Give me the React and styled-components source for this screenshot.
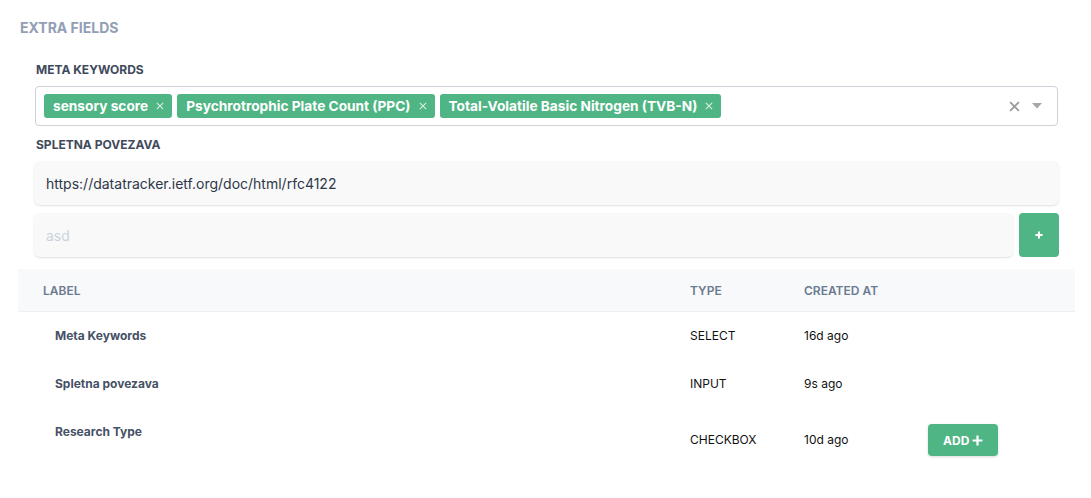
import React from 'react'
import styled, { createGlobalStyle } from 'styled-components'

const GlobalStyle = createGlobalStyle`
  body {
    margin: 0;
    background: #fff;
    font-family: Inter, "Noto Sans", sans-serif;
  }
`;

const green = '#4fb584';

const Wrapper = styled.div`
  width: 1091px;
  padding-top: 18px;
  box-sizing: border-box;
`;

const Title = styled.h2`
  margin: 0 0 0 20px;
  font-size: 14px;
  line-height: 20px;
  font-weight: 700;
  text-transform: uppercase;
  color: #929eb4;
`;

const Fields = styled.div`
  display: flex;
  flex-direction: column;
  padding: 24px 32px 0 34px;
`;

const FieldLabel = styled.label`
  font-size: 12px;
  line-height: 16px;
  font-weight: 700;
  text-transform: uppercase;
  color: #3f4a5c;
  margin: ${({ first }) => (first ? '0' : '11px')} 0 8px 2px;
`;

const SelectBox = styled.div`
  display: flex;
  align-items: center;
  height: 40px;
  box-sizing: border-box;
  margin: 0 1px;
  padding: 0 8px;
  border: 1px solid #cfd2d8;
  border-radius: 4px;
  background: #fff;
`;

const Tags = styled.div`
  flex: 1;
  display: flex;
  gap: 5px;
`;

const Tag = styled.span`
  display: inline-flex;
  align-items: center;
  height: 24px;
  padding: 0 8px 0 9px;
  gap: 8px;
  border-radius: 3px;
  background: ${green};
  color: #fff;
  font-size: 13.7px;
  font-weight: 700;
`;

const Indicators = styled.div`
  display: flex;
  align-items: center;
  gap: 12px;
  padding-right: 7px;
`;

const InputRow = styled.div`
  display: flex;
  gap: 6px;
  margin-top: ${({ gap }) => gap || 0}px;
`;

const TextInput = styled.input`
  flex: 1;
  height: 44px;
  box-sizing: border-box;
  padding: 0 12px;
  border: none;
  border-radius: 6px;
  background: #f9f9f9;
  box-shadow: 0 1px 2px rgba(0, 0, 0, 0.12);
  font-family: inherit;
  font-size: 14px;
  color: #2d3748;
  outline: none;

  &::placeholder {
    color: #cbd2dc;
  }
`;

const PlusButton = styled.button`
  width: 40px;
  height: 44px;
  border: none;
  border-radius: 4px;
  background: ${green};
  color: #fff;
  display: flex;
  align-items: center;
  justify-content: center;
  cursor: pointer;
`;

const Table = styled.table`
  margin: 12px 0 0 18px;
  width: 1057px;
  border-collapse: collapse;
  table-layout: fixed;
`;

const Th = styled.th`
  height: 42px;
  padding: 0 0 0 25px;
  text-align: left;
  background: #f7f9fb;
  border-bottom: 1px solid #edf0f4;
  font-size: 12px;
  font-weight: 600;
  text-transform: uppercase;
  color: #6c7a90;
`;

const Td = styled.td`
  padding: 16px 0 16px ${({ label }) => (label ? 37 : 25)}px;
  vertical-align: ${({ label }) => (label ? 'top' : 'middle')};
  font-size: 12px;
  line-height: 16px;
  font-weight: ${({ label }) => (label ? 700 : 400)};
  color: ${({ label }) => (label ? '#465166' : '#111')};
`;

const AddButton = styled.button`
  display: inline-flex;
  align-items: center;
  gap: 3px;
  height: 32px;
  padding: 0 15px;
  border: none;
  border-radius: 4px;
  background: ${green};
  box-shadow: 0 1px 3px rgba(0, 0, 0, 0.15);
  color: #fff;
  font-family: inherit;
  font-size: 12px;
  font-weight: 700;
  cursor: pointer;
`;

const Plus = ({ size = 8, stroke = 2.4 }) => (
  <svg width={size} height={size} viewBox="0 0 10 10">
    <path d="M5 0.5v9M0.5 5h9" stroke="#fff" strokeWidth={stroke} />
  </svg>
);

const Cross = ({ size, color, stroke }) => (
  <svg width={size} height={size} viewBox="0 0 10 10">
    <path d="M1 1l8 8M9 1l-8 8" stroke={color} strokeWidth={stroke} />
  </svg>
);

const tags = [
  'sensory score',
  'Psychrotrophic Plate Count (PPC)',
  'Total-Volatile Basic Nitrogen (TVB-N)',
];

const rows = [
  { label: 'Meta Keywords', type: 'SELECT', created: '16d ago' },
  { label: 'Spletna povezava', type: 'INPUT', created: '9s ago' },
  { label: 'Research Type', type: 'CHECKBOX', created: '10d ago', add: true },
];

const App = () => (
  <Wrapper>
    <GlobalStyle />
    <Title>Extra fields</Title>
    <Fields>
      <FieldLabel first>Meta Keywords</FieldLabel>
      <SelectBox>
        <Tags>
          {tags.map((t) => (
            <Tag key={t}>
              {t}
              <Cross size={8} color="rgba(255,255,255,0.8)" stroke={1.3} />
            </Tag>
          ))}
        </Tags>
        <Indicators>
          <Cross size={11} color="#9a9a9a" stroke={1.6} />
          <svg width="10" height="6" viewBox="0 0 10 6">
            <path d="M0 0h10L5 5.5z" fill="#a6a6a6" />
          </svg>
        </Indicators>
      </SelectBox>
      <FieldLabel>Spletna povezava</FieldLabel>
      <InputRow>
        <TextInput defaultValue="https://datatracker.ietf.org/doc/html/rfc4122" />
      </InputRow>
      <InputRow gap={8}>
        <TextInput placeholder="asd" />
        <PlusButton>
          <Plus size={8} stroke={2.6} />
        </PlusButton>
      </InputRow>
    </Fields>
    <Table>
      <colgroup>
        <col style={{ width: 647 }} />
        <col style={{ width: 114 }} />
        <col style={{ width: 124 }} />
        <col />
      </colgroup>
      <thead>
        <tr>
          <Th>Label</Th>
          <Th>Type</Th>
          <Th>Created at</Th>
          <Th />
        </tr>
      </thead>
      <tbody>
        {rows.map((r) => (
          <tr key={r.label}>
            <Td label>{r.label}</Td>
            <Td>{r.type}</Td>
            <Td>{r.created}</Td>
            <Td>
              {r.add && (
                <AddButton>
                  ADD <Plus size={11} stroke={2} />
                </AddButton>
              )}
            </Td>
          </tr>
        ))}
      </tbody>
    </Table>
  </Wrapper>
);

export default App
